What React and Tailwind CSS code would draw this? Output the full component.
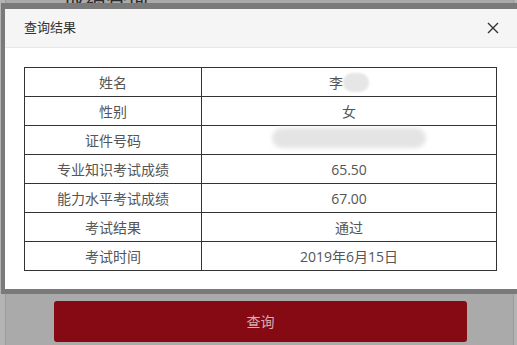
const rows = [
  { label: "姓名", value: "李", blur: "name" },
  { label: "性别", value: "女" },
  { label: "证件号码", value: "", blur: "id" },
  { label: "专业知识考试成绩", value: "65.50" },
  { label: "能力水平考试成绩", value: "67.00" },
  { label: "考试结果", value: "通过" },
  { label: "考试时间", value: "2019年6月15日" },
];

const font = {
  fontFamily: '"Open Sans", "Noto Sans CJK SC", sans-serif',
};

const App = () => {
  return (
    <div
      className="relative w-[517px] h-[345px] overflow-hidden bg-[#b4b4b4]"
      style={font}
    >
      {/* page behind the overlay */}
      <div className="ml-[5px] w-[509px] h-full bg-[#aaaaaa] border-x border-[#9c9c9c] flex flex-col">
        <h1 className="mt-[-12px] ml-[58px] text-[21px] text-[#2b2b2b] leading-[24px]">
          成绩查询
        </h1>
        <div className="mt-auto mb-[3px] ml-[48px] w-[413px] h-[41px] rounded-[3px] bg-[#850a13] flex items-center justify-center text-[14px] text-[#d9aeb1]">
          查询
        </div>
      </div>

      {/* modal */}
      <div className="absolute left-px top-[3px] w-[520px] border-l-4 border-r-4 border-t-[6px] border-b-[5px] border-[#7a7a7a] bg-white">
        <div className="h-[39px] bg-[#f5f5f5] border-b border-[#e8e8e8] flex items-center justify-between pl-[19px] pr-[17px]">
          <span className="text-[13px] text-[#333]">查询结果</span>
          <svg width="12" height="12" viewBox="0 0 12 12" className="mr-[1px]">
            <path d="M1 1 L11 11 M11 1 L1 11" stroke="#333" strokeWidth="1.4" />
          </svg>
        </div>
        <div className="pl-[19px] pt-[19px] pb-[18px]">
          <table className="w-[473px] border-collapse text-[14px] text-[#555]">
            <tbody>
              {rows.map((r) => (
                <tr key={r.label}>
                  <td className="w-[177px] h-[29px] border border-[#333] text-center p-0">
                    {r.label}
                  </td>
                  <td className="h-[29px] border border-[#333] text-center p-0">
                    <span className="relative inline-flex items-center">
                      {r.value}
                      {r.blur === "name" && (
                        <span className="inline-block w-[26px] h-[19px] rounded-full bg-[#e6e6e6] blur-[1px]" />
                      )}
                      {r.blur === "id" && (
                        <span className="inline-block w-[154px] h-[20px] rounded-full bg-[#e4e4e4] blur-[2px]" />
                      )}
                    </span>
                  </td>
                </tr>
              ))}
            </tbody>
          </table>
        </div>
      </div>
    </div>
  );
};

export default App;
